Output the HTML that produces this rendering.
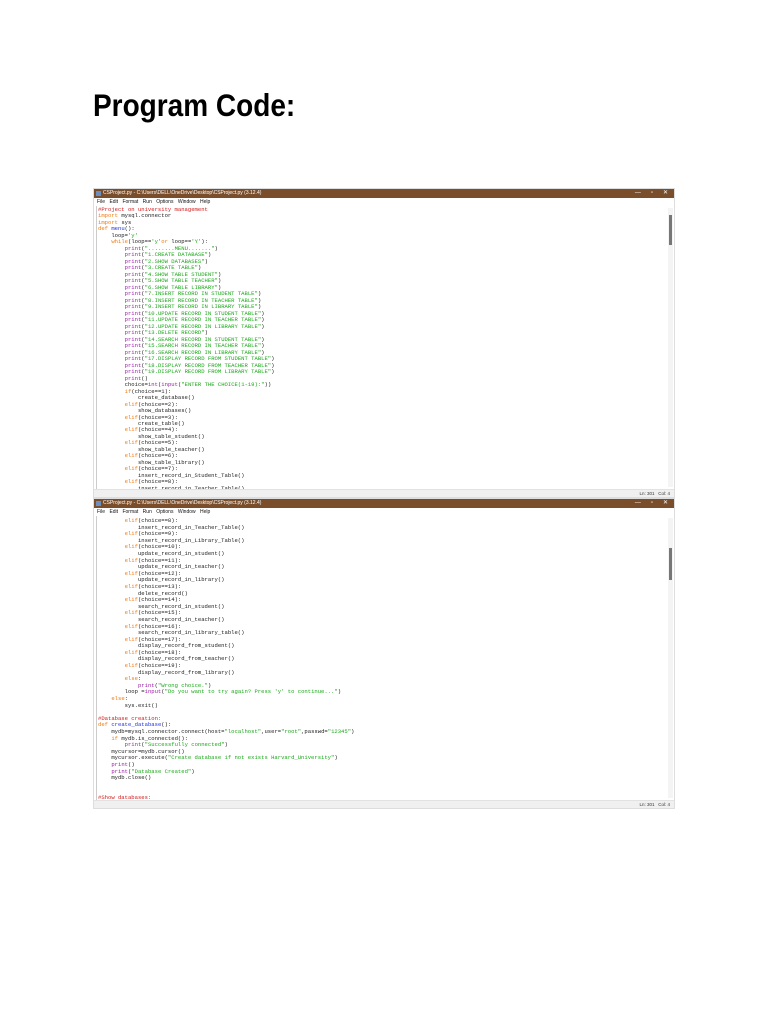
<!DOCTYPE html>
<html><head><meta charset="utf-8">
<style>
body{margin:0;width:768px;height:1024px;background:#fff;position:relative;overflow:hidden;font-family:"Liberation Sans",sans-serif}
h1{position:absolute;left:93px;top:88px;margin:0;font-size:28px;font-weight:bold;color:#000;transform:scaleY(1.12);transform-origin:left top}
.win{position:absolute;left:93px;width:582px;background:#fff;border:1px solid #ddd;box-sizing:border-box}
.tb{position:absolute;left:0;right:0;top:0;height:9px;background:#7a4e2b;color:#fff;font-size:5px;line-height:9px;padding-left:9px;white-space:nowrap}
.tb .ic{position:absolute;left:2px;top:2px;width:5px;height:5px;background:#6a8fc0}
.tb .ctl{position:absolute;right:6px;top:0;font-size:6px;letter-spacing:0}
.mn{position:absolute;left:0;right:0;top:9px;height:8px;font-size:5px;line-height:8px;color:#111;padding-left:3px;word-spacing:3px;background:#fff}
.code{position:absolute;left:2px;right:8px;top:17px;bottom:8px;overflow:hidden;border-left:1px solid #ccc}
pre{margin:0;font-family:"Liberation Mono",monospace;font-size:5.55px;color:#222;padding-left:1px}
.sb{position:absolute;right:1px;top:19px;width:5px;bottom:10px;background:#f4f4f4}
.th{position:absolute;left:1px;width:3px;background:#777}
.st{position:absolute;left:0;right:0;bottom:0;height:8px;background:#f0f0f0;border-top:1px solid #e2e2e2;font-size:4.5px;line-height:8px;text-align:right;padding-right:4px;color:#333;box-sizing:border-box}
.k{color:#f07a10}.s{color:#19a819}.b{color:#9a20a8}.c{color:#d01818}.f{color:#2030e0}
</style></head><body>
<h1>Program Code:</h1>

<div class="win" style="top:188px;height:310px">
<div class="tb"><span class="ic"></span>CSProject.py - C:\Users\DELL\OneDrive\Desktop\CSProject.py (3.12.4)<span class="ctl">—&nbsp;&nbsp;&nbsp;&nbsp;&nbsp;&nbsp;▫&nbsp;&nbsp;&nbsp;&nbsp;&nbsp;&nbsp;✕</span></div>
<div class="mn">File Edit Format Run Options Window Help</div>
<div class="code"><pre style="line-height:6.48px;padding-top:1px"><span class="c">#Project on university management</span>
<span class="k">import</span> mysql.connector
<span class="k">import</span> sys
<span class="k">def</span> <span class="f">menu</span>():
    loop=<span class="s">'y'</span>
    <span class="k">while</span>(loop==<span class="s">'y'</span><span class="k">or</span> loop==<span class="s">'Y'</span>):
        <span class="b">print</span>(<span class="s">"........MENU......."</span>)
        <span class="b">print</span>(<span class="s">"1.CREATE DATABASE"</span>)
        <span class="b">print</span>(<span class="s">"2.SHOW DATABASES"</span>)
        <span class="b">print</span>(<span class="s">"3.CREATE TABLE"</span>)
        <span class="b">print</span>(<span class="s">"4.SHOW TABLE STUDENT"</span>)
        <span class="b">print</span>(<span class="s">"5.SHOW TABLE TEACHER"</span>)
        <span class="b">print</span>(<span class="s">"6.SHOW TABLE LIBRARY"</span>)
        <span class="b">print</span>(<span class="s">"7.INSERT RECORD IN STUDENT TABLE"</span>)
        <span class="b">print</span>(<span class="s">"8.INSERT RECORD IN TEACHER TABLE"</span>)
        <span class="b">print</span>(<span class="s">"9.INSERT RECORD IN LIBRARY TABLE"</span>)
        <span class="b">print</span>(<span class="s">"10.UPDATE RECORD IN STUDENT TABLE"</span>)
        <span class="b">print</span>(<span class="s">"11.UPDATE RECORD IN TEACHER TABLE"</span>)
        <span class="b">print</span>(<span class="s">"12.UPDATE RECORD IN LIBRARY TABLE"</span>)
        <span class="b">print</span>(<span class="s">"13.DELETE RECORD"</span>)
        <span class="b">print</span>(<span class="s">"14.SEARCH RECORD IN STUDENT TABLE"</span>)
        <span class="b">print</span>(<span class="s">"15.SEARCH RECORD IN TEACHER TABLE"</span>)
        <span class="b">print</span>(<span class="s">"16.SEARCH RECORD IN LIBRARY TABLE"</span>)
        <span class="b">print</span>(<span class="s">"17.DISPLAY RECORD FROM STUDENT TABLE"</span>)
        <span class="b">print</span>(<span class="s">"18.DISPLAY RECORD FROM TEACHER TABLE"</span>)
        <span class="b">print</span>(<span class="s">"19.DISPLAY RECORD FROM LIBRARY TABLE"</span>)
        <span class="b">print</span>()
        choice=<span class="b">int</span>(<span class="b">input</span>(<span class="s">"ENTER THE CHOICE(1-19):"</span>))
        <span class="k">if</span>(choice==1):
            create_database()
        <span class="k">elif</span>(choice==2):
            show_databases()
        <span class="k">elif</span>(choice==3):
            create_table()
        <span class="k">elif</span>(choice==4):
            show_table_student()
        <span class="k">elif</span>(choice==5):
            show_table_teacher()
        <span class="k">elif</span>(choice==6):
            show_table_library()
        <span class="k">elif</span>(choice==7):
            insert_record_in_Student_Table()
        <span class="k">elif</span>(choice==8):
            insert_record_in_Teacher_Table()</pre></div>
<div class="sb"><div class="th" style="top:7px;height:30px"></div></div>
<div class="st">Ln: 301&nbsp;&nbsp;&nbsp;Col: 4</div>
</div>

<div class="win" style="top:498px;height:311px">
<div class="tb"><span class="ic"></span>CSProject.py - C:\Users\DELL\OneDrive\Desktop\CSProject.py (3.12.4)<span class="ctl">—&nbsp;&nbsp;&nbsp;&nbsp;&nbsp;&nbsp;▫&nbsp;&nbsp;&nbsp;&nbsp;&nbsp;&nbsp;✕</span></div>
<div class="mn">File Edit Format Run Options Window Help</div>
<div class="code"><pre style="line-height:6.6px;padding-top:2px">        <span class="k">elif</span>(choice==8):
            insert_record_in_Teacher_Table()
        <span class="k">elif</span>(choice==9):
            insert_record_in_Library_Table()
        <span class="k">elif</span>(choice==10):
            update_record_in_student()
        <span class="k">elif</span>(choice==11):
            update_record_in_teacher()
        <span class="k">elif</span>(choice==12):
            update_record_in_library()
        <span class="k">elif</span>(choice==13):
            delete_record()
        <span class="k">elif</span>(choice==14):
            search_record_in_student()
        <span class="k">elif</span>(choice==15):
            search_record_in_teacher()
        <span class="k">elif</span>(choice==16):
            search_record_in_library_table()
        <span class="k">elif</span>(choice==17):
            display_record_from_student()
        <span class="k">elif</span>(choice==18):
            display_record_from_teacher()
        <span class="k">elif</span>(choice==19):
            display_record_from_library()
        <span class="k">else</span>:
            <span class="b">print</span>(<span class="s">"Wrong choice."</span>)
        loop =<span class="b">input</span>(<span class="s">"Do you want to try again? Press 'y' to continue..."</span>)
    <span class="k">else</span>:
        sys.exit()

<span class="c">#Database creation:</span>
<span class="k">def</span> <span class="f">create_database</span>():
    mydb=mysql.connector.connect(host=<span class="s">"localhost"</span>,user=<span class="s">"root"</span>,passwd=<span class="s">"12345"</span>)
    <span class="k">if</span> mydb.is_connected():
        <span class="b">print</span>(<span class="s">"Successfully connected"</span>)
    mycursor=mydb.cursor()
    mycursor.execute(<span class="s">"Create database if not exists Harvard_University"</span>)
    <span class="b">print</span>()
    <span class="b">print</span>(<span class="s">"Database Created"</span>)
    mydb.close()


<span class="c">#Show databases:</span></pre></div>
<div class="sb"><div class="th" style="top:30px;height:32px"></div></div>
<div class="st">Ln: 301&nbsp;&nbsp;&nbsp;Col: 4</div>
</div>
</body></html>
